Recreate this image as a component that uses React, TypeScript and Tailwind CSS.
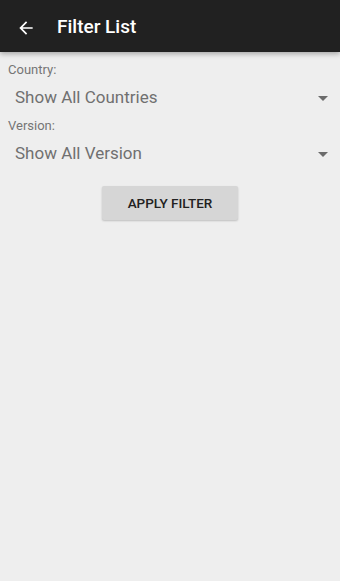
import React from 'react'

function Dropdown({ label, value }: { label: string; value: string }) {
  return (
    <div>
      <div className="pl-2 text-[13px] leading-[16px] text-[#757575]">{label}</div>
      <div className="flex h-[40px] items-center justify-between pl-[15px] pr-[12px]">
        <span className="text-[17px] text-[#707070]">{value}</span>
        <svg width="10" height="5" viewBox="0 0 10 5">
          <path d="M0 0 L10 0 L5 5 Z" fill="#6b6b6b" />
        </svg>
      </div>
    </div>
  )
}

export default function App(): JSX.Element {
  return (
    <div className="flex h-[581px] w-[340px] flex-col bg-[#eeeeee] font-['Roboto',sans-serif]">
      <div className="relative z-10 flex h-[52px] shrink-0 items-center bg-[#212121] pt-[3px] shadow-[0_2px_5px_rgba(0,0,0,0.3)]">
        <svg className="ml-[16px]" width="20" height="20" viewBox="0 0 24 24">
          <path d="M20 11H7.83l5.59-5.59L12 4l-8 8 8 8 1.41-1.41L7.83 13H20v-2z" fill="#ffffff" />
        </svg>
        <span className="ml-[21px] text-[19px] font-medium text-white">Filter List</span>
      </div>

      <div className="pt-[10px]">
        <Dropdown label="Country:" value="Show All Countries" />
        <Dropdown label="Version:" value="Show All Version" />
      </div>

      <div className="mt-[12px] flex justify-center">
        <button className="h-[34px] w-[136px] rounded-[2px] bg-[#d6d6d6] text-[13.5px] font-medium text-[#222222] shadow-[0_1px_2px_rgba(0,0,0,0.2)]">
          APPLY FILTER
        </button>
      </div>
    </div>
  )
}
